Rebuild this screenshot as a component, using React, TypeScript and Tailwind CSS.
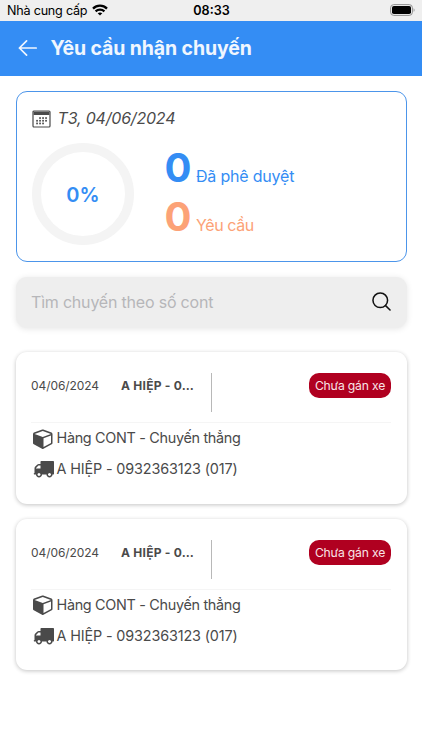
import type { ReactNode } from "react"

const trips = [
  {
    id: 1,
    date: "04/06/2024",
    driver: "A HIỆP - 0…",
    type: "Hàng CONT - Chuyến thẳng",
    vehicle: "A HIỆP - 0932363123 (017)",
    status: "Chưa gán xe",
  },
  {
    id: 2,
    date: "04/06/2024",
    driver: "A HIỆP - 0…",
    type: "Hàng CONT - Chuyến thẳng",
    vehicle: "A HIỆP - 0932363123 (017)",
    status: "Chưa gán xe",
  },
]

const calendarDots = [
  [8, 7.5], [11, 7.5], [14, 7.5],
  [5, 10.2], [8, 10.2], [11, 10.2], [14, 10.2],
  [5, 12.9], [8, 12.9], [11, 12.9],
]

function WifiIcon() {
  return (
    <svg width="16" height="12" viewBox="0 0 16 12" fill="none" stroke="#000" strokeWidth="2.3">
      <path d="M1 4.6C5 .7 11 .7 15 4.6" />
      <path d="M3.6 7.4c2.5-2.4 6.3-2.4 8.8 0" />
      <path d="M8 11.6 5.7 9.3c1.3-1.2 3.3-1.2 4.6 0z" fill="#000" stroke="none" />
    </svg>
  )
}

function BatteryIcon() {
  return (
    <svg width="26" height="12" viewBox="0 0 26 12">
      <rect x=".6" y=".6" width="21.8" height="10.8" rx="3.2" fill="none" stroke="#8f8f8f" strokeWidth="1" />
      <rect x="2" y="2" width="19" height="8" rx="1.8" fill="#000" />
      <path d="M23.6 4.2c1.3.5 1.3 3.1 0 3.6z" fill="#8f8f8f" />
    </svg>
  )
}

function CalendarIcon() {
  return (
    <svg className="mt-px" width="19" height="18" viewBox="0 0 19 18">
      <rect x="1" y="1" width="17" height="16" rx="1" fill="none" stroke="#4a4a4a" strokeWidth="1.2" />
      <rect x="1.6" y="1.6" width="15.8" height="3.4" fill="#4a4a4a" />
      {calendarDots.map(([x, y]) => (
        <rect key={`${x}-${y}`} x={x - 0.8} y={y - 0.3} width="1.7" height="1.7" fill="#4a4a4a" />
      ))}
    </svg>
  )
}

function CubeIcon() {
  return (
    <svg width="21" height="21" viewBox="0 0 1792 1792" fill="#4a4a4a">
      <path d="M896 1629l640-349v-636l-640 233v752zm-64-865l698-254-698-254-698 254zm832-252v768q0 35-18 65t-49 47l-704 384q-28 16-61 16t-61-16l-704-384q-31-17-49-47t-18-65v-768q0-40 23-73t61-47l704-256q22-8 44-8t44 8l704 256q38 14 61 47t23 73z" />
    </svg>
  )
}

function TruckIcon() {
  return (
    <svg width="21" height="21" viewBox="0 0 1792 1792" fill="#4a4a4a">
      <path d="M640 1408q0-52-38-90t-90-38-90 38-38 90 38 90 90 38 90-38 38-90zm-384-512h384v-256h-158q-13 0-22 9l-195 195q-9 9-9 22v30zm1280 512q0-52-38-90t-90-38-90 38-38 90 38 90 90 38 90-38 38-90zm256-1088v1024q0 15-4 26.5t-13.5 18.5-16.5 11.5-23.5 6-22.5 2-25.5 0-22.5-.5q0 106-75 181t-181 75-181-75-75-181h-384q0 106-75 181t-181 75-181-75-75-181h-64q-3 0-22.5.5t-25.5 0-22.5-2-23.5-6-16.5-11.5-13.5-18.5-4-26.5q0-26 19-45t45-19v-320q0-8-.5-35t0-38 2.5-34.5 6.5-37 14-30.5 22.5-30l198-198q19-19 50.5-32t58.5-13h160v-192q0-26 19-45t45-19h1024q26 0 45 19t19 45z" />
    </svg>
  )
}

function TripLine({ icon, children }: { icon: ReactNode; children: ReactNode }) {
  return (
    <div className="flex h-[30.5px] items-center gap-[2.5px] pl-[2px] text-[14.4px] text-[#4a4a4a]">
      {icon}
      {children}
    </div>
  )
}

export default function App() {
  return (
    <div className="min-h-[750px] w-[422px] bg-white font-['Inter',sans-serif]">
      {/* Status bar */}
      <div className="grid h-[20.5px] grid-cols-3 items-center bg-[#efefef] pl-[7px] pr-[6px] text-black">
        <div className="flex items-center gap-[4.5px] whitespace-nowrap text-[12.6px]">
          <span className="pt-[2px] tracking-[-0.22px]">Nhà cung cấp</span>
          <WifiIcon />
        </div>
        <span className="pt-[2px] text-center text-[12.6px] font-semibold">08:33</span>
        <div className="flex justify-end">
          <BatteryIcon />
        </div>
      </div>

      {/* Header */}
      <header className="flex h-[55px] items-center bg-[#348df4] pl-[18px] text-[#f0f6fe]">
        <svg width="20" height="18" viewBox="0 0 20 18" fill="none" stroke="currentColor" strokeWidth="1.7" strokeLinecap="round" strokeLinejoin="round">
          <path d="M18.2 9H1.4M8.6 1.8 1.4 9l7.2 7.2" />
        </svg>
        <h1 className="ml-[12.5px] pt-[2px] text-[19.5px] font-bold tracking-[-0.12px]">Yêu cầu nhận chuyến</h1>
      </header>

      <main className="px-[15.5px] pt-[15.5px]">
        {/* Summary */}
        <section className="h-[170.5px] rounded-[11px] border border-[#4c95ea] px-[15.5px] pt-[15px]">
          <div className="flex h-[22px] items-center gap-[6.5px] text-[#4a4a4a]">
            <CalendarIcon />
            <span className="text-[16px] italic tracking-[-0.2px]">T3, 04/06/2024</span>
          </div>
          <div className="mt-[14px] flex">
            <div className="flex size-[102px] items-center justify-center rounded-full border-[9px] border-[#f4f4f4] pt-px text-[20px] font-semibold text-[#348df4]">
              0%
            </div>
            <div className="ml-[30.5px] flex flex-col">
              <div className="flex h-[49px] items-baseline gap-[4.5px] text-[#348df4]">
                <span className="text-[40px] font-bold leading-[49px]">0</span>
                <span className="text-[16px] tracking-[-0.2px]">Đã phê duyệt</span>
              </div>
              <div className="flex h-[49px] items-baseline gap-[4.5px] text-[#fca277]">
                <span className="text-[40px] font-bold leading-[49px]">0</span>
                <span className="text-[16px] tracking-[-0.4px]">Yêu cầu</span>
              </div>
            </div>
          </div>
        </section>

        {/* Search */}
        <div className="mt-[15.5px] flex h-[51px] items-center justify-between rounded-[11px] bg-[#eeeeee] pb-[2px] pl-[15.5px] pr-[16px] shadow-[0_1px_6px_rgba(0,0,0,0.1)]">
          <span className="text-[16px] tracking-[-0.2px] text-[#b6b6b9]">Tìm chuyến theo số cont</span>
          <svg width="19" height="19" viewBox="0 0 20 20" fill="none" stroke="#111" strokeWidth="1.6" strokeLinecap="round">
            <circle cx="8.7" cy="8.7" r="7.7" />
            <path d="m14.3 14.3 4.7 4.6" />
          </svg>
        </div>

        {/* Trips */}
        <div className="mt-6 flex flex-col gap-[15px]">
          {trips.map((trip) => (
            <article
              key={trip.id}
              className="h-[151.7px] rounded-[11px] bg-white px-[15.5px] pt-[21px] shadow-[0_1px_4px_rgba(0,0,0,0.24)]"
            >
              <div className="flex h-[50px] items-start border-b border-[#f5f5f5] text-[12px] text-[#4a4a4a]">
                <span className="w-[90px] leading-[26px] tracking-[-0.08px]">{trip.date}</span>
                <span className="w-[75px] whitespace-nowrap font-bold leading-[26px] tracking-[0.25px]">{trip.driver}</span>
                <div className="ml-[15px] h-[39px] w-px bg-[#b8b8b8]" />
                <span className="ml-auto flex h-[25px] w-[82px] items-center justify-center whitespace-nowrap rounded-[10px] bg-[#b00020] pt-px text-[12.2px] tracking-[-0.2px] text-[#f8e4e7]">
                  {trip.status}
                </span>
              </div>
              <TripLine icon={<CubeIcon />}>
                <span className="whitespace-nowrap tracking-[-0.31px]">{trip.type}</span>
              </TripLine>
              <TripLine icon={<TruckIcon />}>
                <span className="whitespace-nowrap tracking-[-0.14px]">{trip.vehicle}</span>
              </TripLine>
            </article>
          ))}
        </div>
      </main>
    </div>
  )
}
